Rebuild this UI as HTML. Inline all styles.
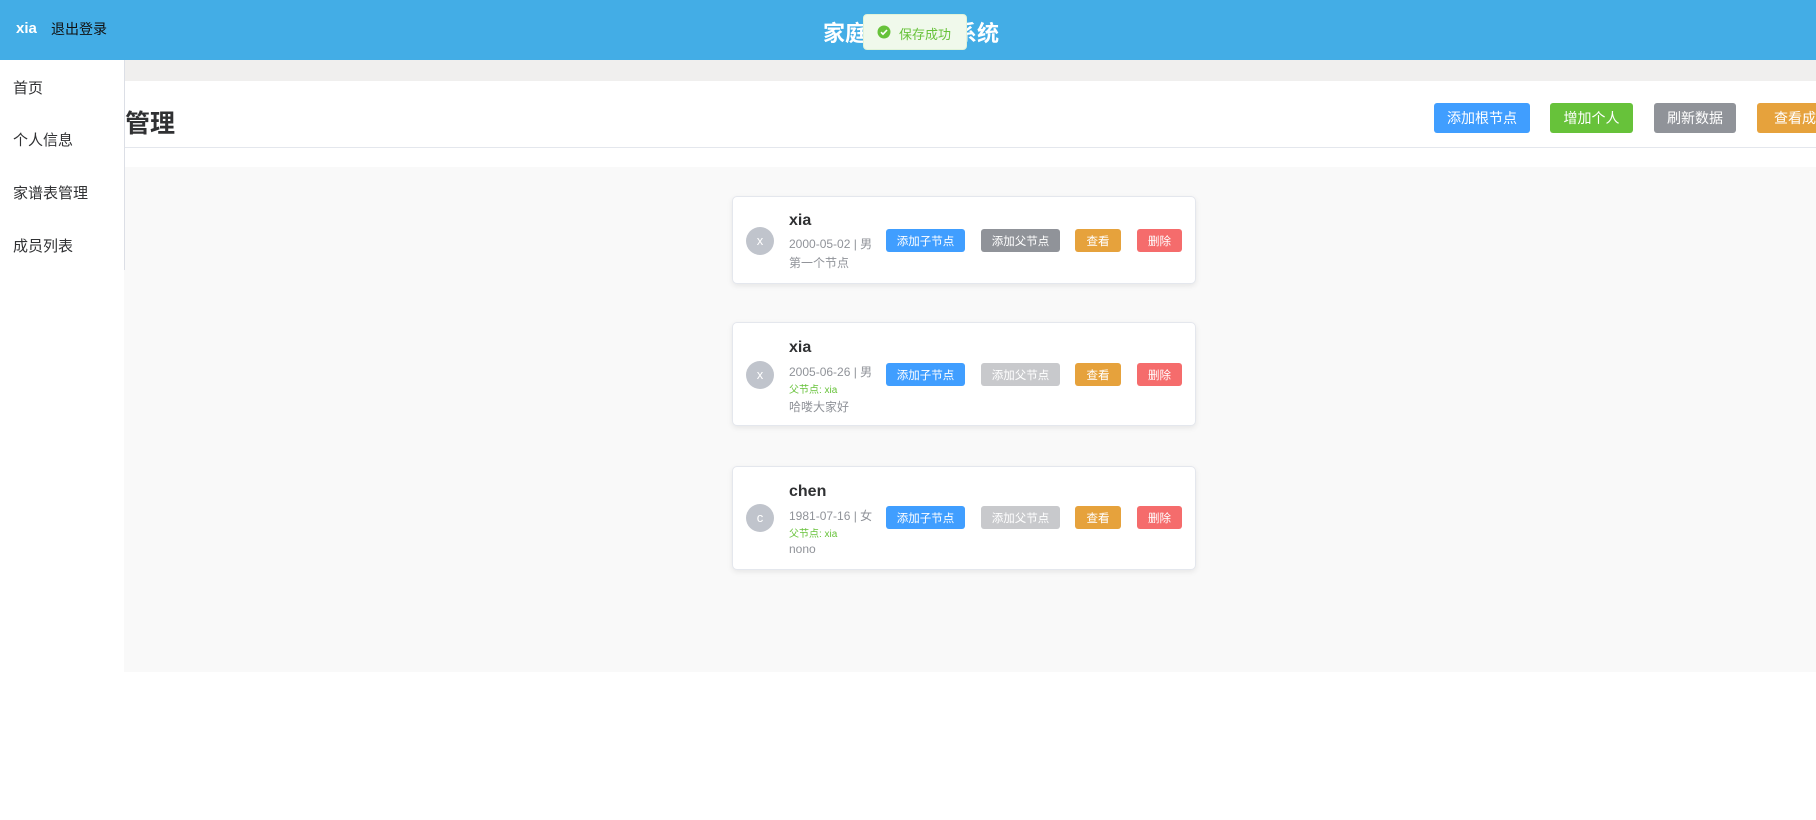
<!DOCTYPE html>
<html><head><meta charset="utf-8"><style>
*{margin:0;padding:0;box-sizing:border-box}
body{width:1816px;height:820px;overflow:hidden;background:#fff;font-family:"Liberation Sans","Noto Sans CJK SC",sans-serif;position:relative}
.hd{position:absolute;left:0;top:0;width:1816px;height:60px;background:#43ade6}
.abs{position:absolute;white-space:nowrap}
.band{position:absolute;left:0;top:60px;width:1816px;height:21px;background:#f0efee}
.line{position:absolute;left:0;top:147px;width:1816px;height:1px;background:#e4e7ed}
.gray{position:absolute;left:124px;top:167px;width:1692px;height:505px;background:#f9f9f9}
.side{position:absolute;left:0;top:60px;width:125px;height:210px;background:#fff;border-right:1px solid #dcdfe6}
.side div{position:absolute;left:13px;font-size:15px;color:#303133}
.btn,.sb{position:absolute;display:flex;align-items:center;justify-content:center;border-radius:3px;color:#fff;white-space:nowrap}
.btn{height:30px;font-size:14px}
.sb{height:23px;font-size:11.5px}
.card{position:absolute;left:732px;width:464px;background:#fff;border:1px solid #e4e7ed;border-radius:5px;box-shadow:0 2px 6px rgba(0,0,0,.08)}
.av{position:absolute;left:13px;width:28px;height:28px;border-radius:50%;background:#c0c4cc;color:#fff;font-size:13px;text-align:center;line-height:28px}
.nm{position:absolute;left:56px;font-size:16px;font-weight:bold;color:#303133}
.dt{position:absolute;left:56px;font-size:12px;color:#909399;white-space:nowrap}
.pr{position:absolute;left:56px;font-size:10px;color:#67c23a}
</style></head><body>
<div class="hd"></div>
<div class="abs" style="left:16px;top:20px;color:#fff;font-weight:bold;font-size:15px">xia</div>
<div class="abs" style="left:51px;top:19px;color:#111;font-size:14px">退出登录</div>
<div class="abs" style="left:823px;top:16px;color:#fff;font-weight:bold;font-size:22px">家庭族谱管理系统</div>
<div class="abs" style="left:863px;top:14px;width:104px;height:36px;background:#f0f9eb;border:1px solid #e1f3d8;border-radius:4px"></div>
<svg class="abs" style="left:877px;top:25px" width="14" height="14" viewBox="0 0 14 14"><circle cx="7" cy="7" r="6.5" fill="#67c23a"/><path d="M4 7.2l2 2 4-4.2" stroke="#fff" stroke-width="1.6" fill="none"/></svg>
<div class="abs" style="left:899px;top:24px;color:#67c23a;font-size:13px">保存成功</div>
<div class="band"></div>
<div class="abs" style="left:50px;top:104px;font-size:25px;font-weight:bold;color:#303133">家谱树管理</div>
<div class="line"></div>
<div class="btn" style="left:1434px;top:103px;width:96px;background:#409eff">添加根节点</div>
<div class="btn" style="left:1550px;top:103px;width:83px;background:#67c23a">增加个人</div>
<div class="btn" style="left:1654px;top:103px;width:82px;background:#909399">刷新数据</div>
<div class="btn" style="left:1757px;top:103px;width:90px;background:#e6a23c">查看成员</div>
<div class="gray"></div>
<div class="side"><div style="top:17px">首页</div><div style="top:69px">个人信息</div><div style="top:122px">家谱表管理</div><div style="top:175px">成员列表</div></div>

<div class="card" style="top:196px;height:88px">
<div class="av" style="top:30px">x</div>
<div class="nm" style="top:15px">xia</div>
<div class="dt" style="top:38px">2000-05-02 | 男</div>
<div class="dt" style="top:57px">第一个节点</div>
<div class="sb" style="left:153px;top:32px;width:79px;background:#409eff">添加子节点</div>
<div class="sb" style="left:248px;top:32px;width:79px;background:#909399">添加父节点</div>
<div class="sb" style="left:342px;top:32px;width:46px;background:#e6a23c">查看</div>
<div class="sb" style="left:404px;top:32px;width:45px;background:#f56c6c">删除</div>
</div>

<div class="card" style="top:322px;height:104px">
<div class="av" style="top:38px">x</div>
<div class="nm" style="top:16px">xia</div>
<div class="dt" style="top:40px">2005-06-26 | 男</div>
<div class="pr" style="top:58px">父节点: xia</div>
<div class="dt" style="top:75px">哈喽大家好</div>
<div class="sb" style="left:153px;top:40px;width:79px;background:#409eff">添加子节点</div>
<div class="sb" style="left:248px;top:40px;width:79px;background:#c8c9cc">添加父节点</div>
<div class="sb" style="left:342px;top:40px;width:46px;background:#e6a23c">查看</div>
<div class="sb" style="left:404px;top:40px;width:45px;background:#f56c6c">删除</div>
</div>

<div class="card" style="top:466px;height:104px">
<div class="av" style="top:37px">c</div>
<div class="nm" style="top:16px">chen</div>
<div class="dt" style="top:40px">1981-07-16 | 女</div>
<div class="pr" style="top:58px">父节点: xia</div>
<div class="dt" style="top:75px">nono</div>
<div class="sb" style="left:153px;top:39px;width:79px;background:#409eff">添加子节点</div>
<div class="sb" style="left:248px;top:39px;width:79px;background:#c8c9cc">添加父节点</div>
<div class="sb" style="left:342px;top:39px;width:46px;background:#e6a23c">查看</div>
<div class="sb" style="left:404px;top:39px;width:45px;background:#f56c6c">删除</div>
</div>
</body></html>
